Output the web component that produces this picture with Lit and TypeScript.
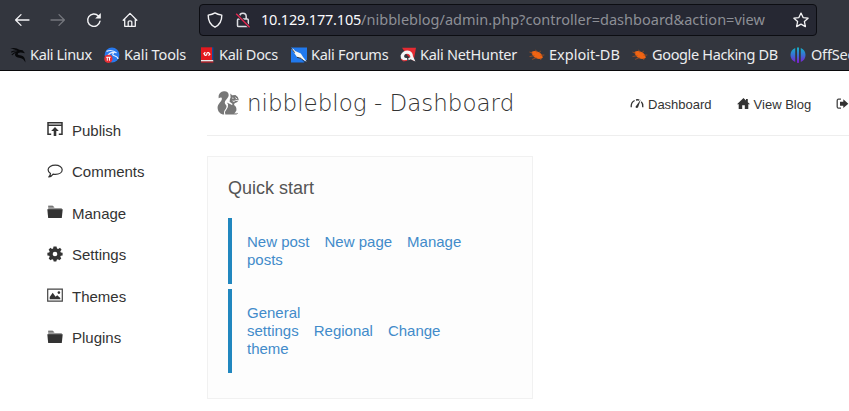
import { LitElement, html, css, svg } from "lit";
import { customElement } from "lit/decorators.js";
import { styleMap } from "lit/directives/style-map.js";

const icon = (w: number, h: number, body: unknown) =>
  html`<svg class="icon" width=${w} height=${h} viewBox="0 0 ${w} ${h}" fill="none">${body}</svg>`;

const back = icon(16, 16, svg`<path d="M15 8H1.6M7 2.6L1.6 8L7 13.4" stroke="#f4f4f6" stroke-width="1.3" stroke-linejoin="round" stroke-linecap="round"/>`);
const forward = icon(16, 16, svg`<path d="M1 8H14.4M9 2.6L14.4 8L9 13.4" stroke="#75777d" stroke-width="1.3" stroke-linejoin="round" stroke-linecap="round"/>`);
const reload = icon(16, 16, svg`<path d="M14 9.2A6.2 6.2 0 1 1 12.4 3.9" stroke="#f4f4f6" stroke-width="1.4" stroke-linecap="round"/><path d="M14.8 1V6.6H9.2Z" fill="#f4f4f6"/>`);
const home = icon(16, 16, svg`<path d="M1.2 8.2L8 1.4L14.8 8.2M2.7 7V14.3H13.3V7M6.2 14V9.8Q6.2 8.8 8 8.8Q9.8 8.8 9.8 9.8V14" stroke="#f4f4f6" stroke-width="1.3" stroke-linejoin="round" stroke-linecap="round"/>`);
const shield = icon(16, 16, svg`<path d="M8 .9C6 2.2 3.6 2.8 1.2 3.1C1.1 8.7 2.8 12.7 8 15.2C13.2 12.7 14.9 8.7 14.8 3.1C12.4 2.8 10 2.2 8 .9Z" stroke="#f4f4f6" stroke-width="1.4" stroke-linejoin="round"/>`);
const lock = icon(16, 16, svg`<path d="M4.6 7V4.6A3.3 3.3 0 0 1 11.2 4.6V7M3.6 7H12.2Q13.3 7 13.3 8.1V13.5Q13.3 14.6 12.2 14.6H3.6Q2.5 14.6 2.5 13.5V8.1Q2.5 7 3.6 7Z" stroke="#dddde2" stroke-width="1.5"/><path d="M1.2 1.8L14.6 15.2" stroke="#262833" stroke-width="3"/><path d="M1.2 1.8L14.6 15.2" stroke="#e22850" stroke-width="1.4"/>`);
const star = icon(16, 16, svg`<path d="M8 1.1L10.1 5.6L15.1 6.2L11.4 9.6L12.4 14.6L8 12.1L3.6 14.6L4.6 9.6L.9 6.2L5.9 5.6Z" stroke="#f4f4f6" stroke-width="1.3" stroke-linejoin="round"/>`);

const dragon = svg`<path d="M.2 1.4Q6 .1 9.3 2.7L12.6 3.3L15 6.2L11 5.6Q7.6 5.4 7.6 7.2Q8 8.3 11.2 8.5Q15.4 9.6 15.4 15.6Q13.5 11.2 10.2 10.9Q4.8 10.6 5 7.2Q5.5 4.7 8 4.2Q6 2.4 .2 1.4Z" fill="#08090b"/><path d="M1.2 5.2Q4.5 3.4 8.2 4.4M1.8 8Q4 5.2 7 5.2" stroke="#08090b" stroke-width="1.1"/>`;
const bug = icon(16, 16, svg`<path d="M2.4 5Q5.5 2.8 9.5 5Q13.3 6.8 13.8 10.7Q11 12.8 7.2 11.2Q3.2 9.4 2.4 5Z" fill="#f06413"/><path d="M.4 5L4 6.3M.5 9.6L5.5 8.6M3.2 12.4L7.5 10.5M6.6 2.8L7.8 5.5M11.5 3.8L10.2 6.3M15.3 8L11.5 8.3M12 13L11 11.2" stroke="#a9501f" stroke-width=".8"/>`);

const bookmarks = [
  { label: "Kali Linux", width: 94, gap: 4, spacing: -0.35, art: icon(16, 16, dragon) },
  { label: "Kali Tools", width: 97, gap: 4, spacing: -0.15, art: icon(16, 16, svg`<circle cx="8" cy="8" r="7.4" fill="#2879ee"/><path d="M2.5 4.4Q8 2 12.5 6M4 8Q7 4.5 10 5.5Q7 8 11 9Q14 10 14 12" stroke="#e6f0ff" stroke-width="1.2"/><circle cx="4.4" cy="11.8" r="4.1" fill="#e82f35"/><path d="M2.2 10.3H6.6M3.3 10.3V13.7M5.5 10.3V13.7" stroke="#fff" stroke-width="1"/>`) },
  { label: "Kali Docs", width: 90, gap: 2, spacing: -0.3, art: icon(16, 16, svg`<path d="M0 .3H11V13H0Z" fill="#e3191f"/><path d="M11 .3H12.4V13.3H11Z" fill="#134a9a"/><path d="M0 13H12.2V14.6H0Z" fill="#e9e9e9"/><path d="M0 14.5H12.4V15.6H0Z" fill="#d31b22"/><path d="M4.4 5.2L2.9 6.6L4.2 8.4Q5.8 8.6 5.8 7Q6 5.2 7.6 5.6L8.9 7.2L7.5 8.7" stroke="#fff" stroke-width="1.2"/>`) },
  { label: "Kali Forums", width: 109, gap: 4, spacing: -0.25, art: icon(16, 16, svg`<path d="M0 .5H16V12.5L13 15.5H0Z" fill="#2179ed"/><path d="M0 1.2Q2.6 1.4 4.2 4L9.8 6.5L12.2 10.3L15.7 14.8L9.6 11.5L5.8 9.8L3.4 6.2Z" fill="#f6f7f5"/><path d="M0 1L3.7 5.7M6 10.3L10 11.3L14 15.3" stroke="#272a31" stroke-width=".9"/>`) },
  { label: "Kali NetHunter", width: 129, gap: 4, spacing: -0.28, art: icon(16, 16, svg`<path d="M2 .8H16L13.6 14L7 8Z" fill="#e52b32"/><path d="M.6 8.4Q2.6 3.4 7.6 3.4Q12.8 3.8 13 9.2L15.4 14.6L10.6 12.2L8.6 13.2L8.2 11.2L10.4 10.2Q10.2 6.9 7 6.7Q4.1 7 4.1 9.5Q4.4 11.3 7 11.1L7.4 13.2Q2.6 14.8 .9 11.3Z" fill="#f5f5f5"/><path d="M1 12.2Q3 15 7 13.4" stroke="#e52b32" stroke-width="1"/>`) },
  { label: "Exploit-DB", width: 103, gap: 4, spacing: 0, art: bug },
  { label: "Google Hacking DB", width: 158, gap: 4, spacing: -0.35, art: bug },
  { label: "OffSec", width: 90, gap: 5, spacing: -0.2, art: icon(16, 16, svg`<defs><linearGradient id="os" x1="0" y1="0" x2="0" y2="1"><stop stop-color="#12b5c8"/><stop offset=".5" stop-color="#396fd5"/><stop offset="1" stop-color="#8317d2"/></linearGradient></defs><path d="M5.2 1V15Q.5 12.8 .5 8T5.2 1ZM7 .4H9V15.8L8 16L7 15.8ZM10.8 1Q15.5 3.2 15.5 8T10.8 15Z" fill="url(#os)"/>`) },
];

const folder = icon(16, 14, svg`<path d="M1.2 1.5H6L7 3H14.8V5H1.2Z" fill="#999"/><path d="M1.2 1.2H5.8L6.8 2.4" stroke="#555"/><path d="M.3 4.2H15.7L14.8 13H1.2Z" fill="#333"/>`);
const menu = [
  { label: "Publish", art: icon(16, 14, svg`<path d="M4.2 12.3H1V.8H15V12.3H11.8M1 3.3H15" stroke="#333" stroke-width="1.5"/><path d="M8 5L11.8 9H9.3V14H6.7V9H4.2Z" fill="#333"/>`) },
  { label: "Comments", art: icon(16, 14, svg`<path d="M8.3 1.1C12.2 1.1 15.2 3 15.2 5.7C15.2 8.5 12.2 10.4 8.4 10.4Q7.2 10.4 6.1 10.1Q4.6 12.4 1.8 13Q3.4 11.4 3.5 9.4Q1.1 7.9 1.1 5.7C1.1 3 4.3 1.1 8.3 1.1Z" stroke="#333" stroke-width="1.2" stroke-linejoin="round"/>`) },
  { label: "Manage", art: folder },
  { label: "Settings", art: html`<svg class="icon" width="16" height="16" viewBox="0 0 16 16"><path fill="#333" fill-rule="evenodd" d="M6.5 .4H9.5L10 2.4L11.2 2.9L13 1.8L14.6 3.8L13.3 5.3L13.8 6.4L15.6 6.8V9.4L13.8 9.7L13.3 10.8L14.3 12.5L12.4 14.3L10.9 13.2L9.8 13.7L9.3 15.6H6.7L6.2 13.7L5.1 13.2L3.5 14.3L1.7 12.5L2.7 10.8L2.2 9.7L.4 9.4V6.8L2.2 6.4L2.7 5.3L1.6 3.7L3.4 1.8L5 2.9L6.1 2.4ZM8 5.7A2.3 2.3 0 1 0 8 10.3A2.3 2.3 0 1 0 8 5.7Z"/></svg>` },
  { label: "Themes", art: icon(16, 14, svg`<path d="M.7 1.2H15.3V13.1H.7Z" stroke="#444" stroke-width="1.2"/><path d="M2.7 11.3V9L5.7 4.8L8.6 8.7L10.2 7.3L13.3 10.1V11.3Z" fill="#333"/><circle cx="11.9" cy="4.6" r="1.3" fill="#333"/>`) },
  { label: "Plugins", art: folder },
];

const squirrel = icon(22, 24, svg`<path fill="#777" d="M6.9 .3C10.3 -.1 12.6 2.6 11.3 5.8C10.2 8.4 7.2 9.9 7.9 12.3C8.3 13.8 9.8 14.2 9.5 16C9 18.6 6 19.6 7.3 23.6C3.4 23.3 .8 20.6 .6 16.9C.4 13.2 3.9 11.2 4.8 8.4C5.2 6.4 4 6 1.7 7.2C1.1 3.6 3.2 .7 6.9 .3Z"/><path fill="#777" d="M13.3 2.6L15.2 4.3L18.4 4L20.8 5.9L21.7 8.6L20.4 11L17.6 12.3L17 14Q19.9 16 19.4 19.4L17.6 22.3L19.8 22.6V23.6H8.3Q7.4 20.5 9.8 18.1Q11.4 16 11 13.2L9.8 11.6L12.5 12.8L15 14.1L15.6 13L12.6 10.7L12.9 8.2L13.6 6.6Z"/><path d="M15.6 9.9Q17.1 11.2 18.4 9.4L20.9 9.5M15.2 7.1L16.5 7.3M18.3 6.6L20.2 8.1" stroke="#fff" stroke-width=".9"/><path d="M17.5 21.9H21V23H17.5Z" fill="#aaa"/>`);
const gauge = icon(14, 12, svg`<path d="M1.2 9.3Q.9 4.3 4.6 2.5M6 2Q8 1.5 9.3 2.1M11.3 3.8Q13.2 5.7 12.8 9.3" stroke="#333" stroke-width="1.3"/><path d="M10.8 1.6L8 9.5Q6.5 10.5 5.5 9.2Q5.4 8.4 6.2 7.7Z" fill="#333"/>`);
const house = icon(13, 12, svg`<path d="M6.5 .1L9 2.4V1.1H10.8V4.2L13 6.3H11.3V11H7.8V7.2H5.2V11H1.7V6.3H0Z" fill="#333"/>`);
const exit = icon(13, 12, svg`<path d="M5 1.2H2.5Q1.2 1.2 1.2 2.7V8.7Q1.2 10.2 2.5 10.2H5" stroke="#444" stroke-width="1.3"/><path d="M4 3.7H7.3V1.2L12.3 5.7L7.3 10.1V7.7H4Z" fill="#333"/>`);

@customElement("browser-chrome")
class BrowserChrome extends LitElement {
  static styles = css`
    :host { display: block; height: 71px; box-sizing: border-box; background: #33363e; border-bottom: 1px solid #09090b; color: #ecedef; font: 14.5px/20px "Noto Sans", sans-serif; overflow: hidden; }
    .icon { display: block; flex: none; }
    .nav { display: flex; align-items: center; height: 39px; padding-left: 14px; gap: 20px; }
    .address { display: flex; align-items: center; box-sizing: border-box; width: 618px; height: 32px; margin-left: 41px; padding: 0 7px; background: #262833; border: 1px solid #0c0d12; border-radius: 4px; }
    .lock { margin-left: 12px; }
    .url { flex: 1; margin-left: 10px; padding-bottom: 1px; color: #8d8f96; white-space: pre; letter-spacing: 0.02px; }
    .host { color: #fbfbfe; letter-spacing: -0.2px; }
    .marks { display: flex; height: 32px; padding-left: 10px; }
    .mark { display: flex; align-items: center; flex: none; white-space: nowrap; }
    .label { padding-bottom: 2px; }
  `;
  render() {
    return html`
      <div class="nav">${back}${forward}${reload}${home}
        <div class="address">${shield}<span class="lock">${lock}</span><span class="url"><span class="host">10.129.177.105</span>/nibbleblog/admin.php?controller=dashboard&amp;action=view</span>${star}</div>
      </div>
      <div class="marks">
        ${bookmarks.map((b) => html`<div class="mark" style=${styleMap({ width: `${b.width}px`, gap: `${b.gap}px`, letterSpacing: `${b.spacing}px` })}>${b.art}<span class="label">${b.label}</span></div>`)}
      </div>`;
  }
}

@customElement("app-root")
class AppRoot extends LitElement {
  static styles = css`
    :host { display: block; width: 849px; height: 411px; overflow: hidden; background: #fff; color: #333; font-family: "Liberation Sans", sans-serif; }
    .icon { display: block; flex: none; }
    .page { display: flex; height: 340px; }
    .side { width: 160px; padding: 39px 0 0 47px; flex: none; }
    .item { display: flex; align-items: center; height: 41.5px; gap: 9px; font-size: 15px; line-height: 20px; }
    .item .icon { margin-bottom: 3px; }
    .main { flex: 1; min-width: 0; }
    .head { display: flex; height: 64px; border-bottom: 1px solid #eee; }
    .brand { display: flex; width: 423px; flex: none; padding: 20px 0 0 10px; box-sizing: border-box; gap: 8px; }
    .title { font: 200 23px/24px "DejaVu Sans", sans-serif; white-space: nowrap; }
    .links { display: flex; padding-top: 25px; gap: 25px; font-size: 13px; line-height: 18px; white-space: nowrap; }
    .link { display: flex; gap: 4px; height: 18px; }
    .link .icon { margin-top: 2px; }
    .card { box-sizing: border-box; width: 326px; height: 243px; margin-top: 20px; padding: 20px; background: #fdfdfd; border: 1px solid #f1f1f1; }
    .heading { font-size: 18px; line-height: 22px; color: #555; margin-bottom: 19px; }
    .group { border-left: 4px solid #2187bf; padding: 15px; margin-bottom: 5px; color: #428bca; font-size: 15px; line-height: 18px; white-space: pre; }
    .row { display: flex; gap: 15px; }
  `;
  render() {
    const group = (rows: string[][]) => html`<div class="group">${rows.map((r) => html`<div class="row">${r.map((t) => html`<span>${t}</span>`)}</div>`)}</div>`;
    return html`
      <browser-chrome></browser-chrome>
      <div class="page">
        <div class="side">${menu.map((m) => html`<div class="item">${m.art}<span>${m.label}</span></div>`)}</div>
        <div class="main">
          <div class="head">
            <div class="brand">${squirrel}<span class="title">nibbleblog - Dashboard</span></div>
            <div class="links">
              <span class="link">${gauge}<span>Dashboard</span></span>
              <span class="link">${house}<span>View Blog</span></span>
              <span class="link">${exit}</span>
            </div>
          </div>
          <div class="card">
            <div class="heading">Quick start</div>
            ${group([["New post", "New page", "Manage"], ["posts"]])}
            ${group([["General"], ["settings", "Regional", "Change"], ["theme"]])}
          </div>
        </div>
      </div>`;
  }
}
